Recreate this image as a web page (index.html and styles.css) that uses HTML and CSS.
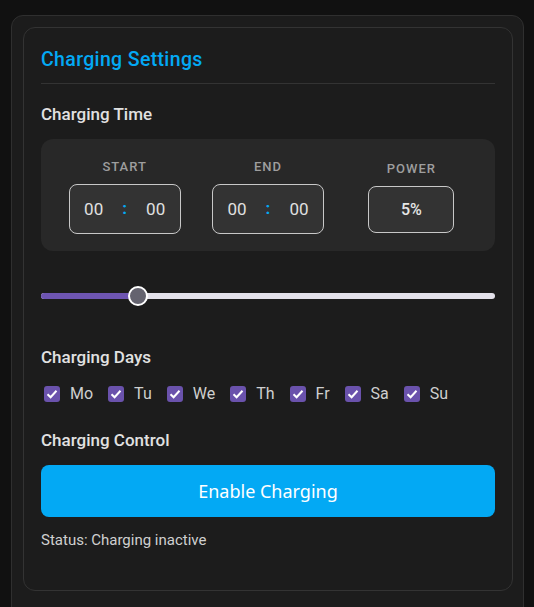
FILE: index.html
```html
<!DOCTYPE html>
<html>
<head>
<meta charset="utf-8">
<link rel="stylesheet" href="styles.css">
</head>
<body>
<div class="outer">
  <div class="card">
    <h1 class="title">Charging Settings</h1>
    <h2 class="section first">Charging Time</h2>
    <div class="timebox">
      <div class="col">
        <div class="label">START</div>
        <div class="time"><span class="num">00</span><span class="colon">:</span><span class="num">00</span></div>
      </div>
      <div class="col">
        <div class="label">END</div>
        <div class="time"><span class="num">00</span><span class="colon">:</span><span class="num">00</span></div>
      </div>
      <div class="col">
        <div class="label">POWER</div>
        <div class="power">5%</div>
      </div>
    </div>
    <div class="slider">
      <div class="track"><div class="fill" style="width: 97px"></div></div>
      <div class="thumb" style="left: 87px"></div>
    </div>
    <h2 class="section days-title">Charging Days</h2>
    <div class="days">
      <label class="day"><span class="box"><svg viewBox="0 0 16 16" width="16" height="16"><path d="M3.5 8.2 L6.6 11.2 L12.5 4.8" fill="none" stroke="#fff" stroke-width="2"/></svg></span>Mo</label>
      <label class="day"><span class="box"><svg viewBox="0 0 16 16" width="16" height="16"><path d="M3.5 8.2 L6.6 11.2 L12.5 4.8" fill="none" stroke="#fff" stroke-width="2"/></svg></span>Tu</label>
      <label class="day"><span class="box"><svg viewBox="0 0 16 16" width="16" height="16"><path d="M3.5 8.2 L6.6 11.2 L12.5 4.8" fill="none" stroke="#fff" stroke-width="2"/></svg></span>We</label>
      <label class="day"><span class="box"><svg viewBox="0 0 16 16" width="16" height="16"><path d="M3.5 8.2 L6.6 11.2 L12.5 4.8" fill="none" stroke="#fff" stroke-width="2"/></svg></span>Th</label>
      <label class="day"><span class="box"><svg viewBox="0 0 16 16" width="16" height="16"><path d="M3.5 8.2 L6.6 11.2 L12.5 4.8" fill="none" stroke="#fff" stroke-width="2"/></svg></span>Fr</label>
      <label class="day"><span class="box"><svg viewBox="0 0 16 16" width="16" height="16"><path d="M3.5 8.2 L6.6 11.2 L12.5 4.8" fill="none" stroke="#fff" stroke-width="2"/></svg></span>Sa</label>
      <label class="day"><span class="box"><svg viewBox="0 0 16 16" width="16" height="16"><path d="M3.5 8.2 L6.6 11.2 L12.5 4.8" fill="none" stroke="#fff" stroke-width="2"/></svg></span>Su</label>
    </div>
    <h2 class="section control-title">Charging Control</h2>
    <button class="enable">Enable Charging</button>
    <div class="status">Status: Charging inactive</div>
  </div>
</div>
</body>
</html>
```
FILE: styles.css
```css
html, body {
  margin: 0;
  padding: 0;
  background: #111111;
  font-family: Roboto, "Liberation Sans", sans-serif;
  color: #e1e1e1;
}
body {
  padding: 15px 10px 0 11px;
  height: 607px;
  box-sizing: border-box;
  overflow: hidden;
}
.outer {
  background: #1c1c1c;
  border: 1px solid #2f2f2f;
  border-radius: 12px;
  padding: 11px 10px 11px 11px;
  height: 620px;
  box-sizing: border-box;
}
.card {
  background: #1c1c1c;
  border: 1px solid #333333;
  border-radius: 12px;
  padding: 19px 17px 40px 17px;
  height: 564px;
  box-sizing: border-box;
}
.title {
  margin: 0;
  font-size: 19.5px;
  line-height: 26px;
  font-weight: 500;
  letter-spacing: 0.35px;
  color: #03a9f4;
  padding-bottom: 10px;
  border-bottom: 1px solid #333333;
}
.section {
  margin: 0;
  font-size: 17px;
  line-height: 20px;
  font-weight: 500;
  color: #e1e1e1;
}
.section.first { margin-top: 20px; }
.timebox {
  margin-top: 15px;
  background: #282828;
  border-radius: 12px;
  padding: 19px 12px 17px;
  display: grid;
  grid-template-columns: 1fr 1fr 1fr;
  align-items: center;
  height: 112px;
  box-sizing: border-box;
}
.col {
  display: flex;
  flex-direction: column;
  align-items: center;
  gap: 9px;
}
.label {
  font-size: 13px;
  line-height: 17px;
  font-weight: 500;
  letter-spacing: 1px;
  color: #9e9e9e;
}
.time {
  width: 112px;
  height: 50px;
  box-sizing: border-box;
  border: 1px solid #c8c8c8;
  border-radius: 8px;
  background: #333333;
  display: flex;
  align-items: center;
  justify-content: space-between;
  padding: 0 13px 0 13px;
  font-size: 17px;
  color: #e0e0e0;
}
.num { width: 22px; text-align: center; }
.colon { color: #03a9f4; font-weight: 700; font-size: 17px; position: relative; top: -1px; }
.power {
  width: 86px;
  height: 47px;
  box-sizing: border-box;
  border: 1px solid #c8c8c8;
  border-radius: 8px;
  background: #333333;
  display: flex;
  align-items: center;
  justify-content: center;
  font-size: 16px;
  font-weight: 500;
  color: #e6e6e6;
}
.slider {
  position: relative;
  margin-top: 35px;
  height: 20px;
  display: flex;
  align-items: center;
}
.track {
  width: 100%;
  height: 6px;
  border-radius: 3px;
  background: #e3e1ea;
  overflow: hidden;
}
.fill {
  height: 100%;
  background: #6e55b2;
}
.thumb {
  position: absolute;
  top: 0;
  width: 20px;
  height: 20px;
  box-sizing: border-box;
  border-radius: 50%;
  background: #64636f;
  border: 2px solid #ffffff;
}
.days-title { margin-top: 41px; }
.days {
  margin-top: 17px;
  display: flex;
  align-items: center;
  padding-left: 3px;
  height: 20px;
}
.day {
  display: flex;
  align-items: center;
  gap: 10px;
  font-size: 16px;
  line-height: 20px;
  color: #cfcfcf;
  margin-right: 15px;
}
.box {
  width: 16px;
  height: 16px;
  border-radius: 3px;
  background: #6a52ac;
  display: flex;
}
.control-title { margin-top: 26px; }
.enable {
  display: block;
  width: 100%;
  margin-top: 15px;
  height: 52px;
  border: none;
  border-radius: 8px;
  background: #03a9f4;
  color: #ffffff;
  font-family: "Noto Sans", "Open Sans", sans-serif;
  font-size: 18px;
}
.status {
  margin-top: 14px;
  font-size: 15px;
  line-height: 18px;
  color: #d0d0d0;
}
```
